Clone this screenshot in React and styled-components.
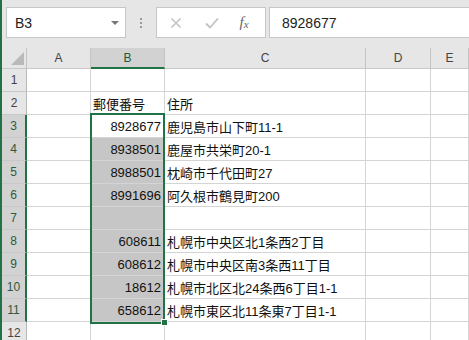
import React from 'react';
import styled, { createGlobalStyle } from 'styled-components';

const GlobalStyle = createGlobalStyle`
  html, body { margin: 0; padding: 0; background: #fff; }
  body { font-family: "Liberation Sans", "Noto Sans CJK JP", sans-serif; }
`;

const GREEN = '#217346';

const Window = styled.div`
  width: 469px;
  height: 340px;
  overflow: hidden;
  box-sizing: border-box;
  border-left: 2px solid ${GREEN};
  background: #e6e6e6;
`;

const FormulaBar = styled.div`
  height: 48px;
  box-sizing: border-box;
  padding: 7px 0 0 4px;
  display: flex;
  align-items: flex-start;
`;

const Box = styled.div`
  height: 31px;
  box-sizing: border-box;
  border: 1px solid #c6c6c6;
  background: #fff;
  display: flex;
  align-items: center;
`;

const NameBox = styled(Box)`
  width: 120px;
  padding: 0 6px 0 8px;
  justify-content: space-between;
  font-size: 14px;
  color: #222;
`;

const Arrow = styled.span`
  width: 0;
  height: 0;
  border-left: 4px solid transparent;
  border-right: 4px solid transparent;
  border-top: 4px solid #777;
`;

const Dots = styled.div`
  width: 30px;
  height: 31px;
  display: flex;
  flex-direction: column;
  align-items: center;
  justify-content: center;
  gap: 2px;
  span {
    width: 2px;
    height: 2px;
    background: #9a9a9a;
  }
`;

const ButtonBox = styled(Box)`
  width: 110px;
  padding: 0 0 0 12px;
  gap: 0;
`;

const IconSlot = styled.span`
  width: ${p => p.$w}px;
  display: flex;
  justify-content: center;
  align-items: center;
`;

const Fx = styled.span`
  font-family: "Liberation Serif", "DejaVu Serif", serif;
  font-style: italic;
  font-size: 15px;
  color: #666;
  sub {
    font-size: 11px;
    vertical-align: -1px;
  }
`;

const FormulaInput = styled(Box)`
  flex: 1;
  margin-left: 3px;
  margin-right: -2px;
  padding-left: 12px;
  font-size: 14px;
  color: #222;
`;

const Sheet = styled.div`
  position: relative;
  display: grid;
  grid-template-columns: 25px 64px 74px 201px 65px 1fr;
  grid-template-rows: 21px;
  grid-auto-rows: 23px;
  background: #fff;
`;

const ColHead = styled.div`
  box-sizing: border-box;
  background: ${p => (p.$sel ? '#d2d2d2' : '#e6e6e6')};
  border-right: 1px solid #c4c4c4;
  border-bottom: ${p => (p.$sel ? `2px solid ${GREEN}` : '1px solid #c8c8c8')};
  color: ${p => (p.$sel ? '#1f5a37' : '#444')};
  font-size: 12px;
  display: flex;
  align-items: center;
  justify-content: center;
  padding-top: ${p => (p.$sel ? '1px' : '0')};
`;

const Corner = styled(ColHead)`
  position: relative;
  &::after {
    content: '';
    position: absolute;
    right: 2px;
    bottom: 3px;
    width: 0;
    height: 0;
    border-left: 13px solid transparent;
    border-bottom: 13px solid #b9b9b9;
  }
`;

const RowHead = styled.div`
  box-sizing: border-box;
  background: ${p => (p.$sel ? '#d2d2d2' : '#e6e6e6')};
  border-right: ${p => (p.$sel ? `2px solid ${GREEN}` : '1px solid #b8b8b8')};
  border-bottom: 1px solid #c8c8c8;
  color: ${p => (p.$sel ? '#2b5a3e' : '#444')};
  font-size: 12px;
  display: flex;
  align-items: center;
  justify-content: center;
`;

const Cell = styled.div`
  box-sizing: border-box;
  background: ${p => (p.$fill ? '#c6c6c6' : '#fff')};
  border-right: 1px solid #d4d4d4;
  border-bottom: 1px solid #d4d4d4;
  font-size: 13px;
  color: #111;
  display: flex;
  align-items: center;
  justify-content: ${p => (p.$right ? 'flex-end' : 'flex-start')};
  padding: 1px 3px 0 2px;
  white-space: nowrap;
  overflow: visible;
`;

const Selection = styled.div`
  position: absolute;
  left: 88px;
  top: 65px;
  width: 75px;
  height: 211px;
  box-sizing: border-box;
  border: 2px solid ${GREEN};
  pointer-events: none;
`;

const Handle = styled.div`
  position: absolute;
  right: -4px;
  bottom: -3px;
  width: 5px;
  height: 5px;
  background: ${GREEN};
  outline: 1px solid #fff;
`;

const rows = [
  { b: '', c: '' },
  { b: '郵便番号', c: '住所', text: true },
  { b: '8928677', c: '鹿児島市山下町11-1' },
  { b: '8938501', c: '鹿屋市共栄町20-1' },
  { b: '8988501', c: '枕崎市千代田町27' },
  { b: '8991696', c: '阿久根市鶴見町200' },
  { b: '', c: '' },
  { b: '608611', c: '札幌市中央区北1条西2丁目' },
  { b: '608612', c: '札幌市中央区南3条西11丁目' },
  { b: '18612', c: '札幌市北区北24条西6丁目1-1' },
  { b: '658612', c: '札幌市東区北11条東7丁目1-1' },
  { b: '', c: '' },
];

function CrossIcon() {
  return (
    <svg width="12" height="12" viewBox="0 0 12 12">
      <path d="M1.5 1.5 L10.5 10.5 M10.5 1.5 L1.5 10.5" stroke="#c2c2c2" strokeWidth="1.6" fill="none" />
    </svg>
  );
}

function CheckIcon() {
  return (
    <svg width="14" height="12" viewBox="0 0 14 12">
      <path d="M1 6.5 L5 10.5 L13 1.5" stroke="#c2c2c2" strokeWidth="1.8" fill="none" />
    </svg>
  );
}

export default function App() {
  return (
    <>
      <GlobalStyle />
      <Window>
        <FormulaBar>
          <NameBox>
            <span>B3</span>
            <Arrow />
          </NameBox>
          <Dots>
            <span />
            <span />
            <span />
          </Dots>
          <ButtonBox>
            <IconSlot $w={14}><CrossIcon /></IconSlot>
            <IconSlot $w={22} />
            <IconSlot $w={14}><CheckIcon /></IconSlot>
            <IconSlot $w={18} />
            <IconSlot $w={14}><Fx>f<sub>x</sub></Fx></IconSlot>
          </ButtonBox>
          <FormulaInput>8928677</FormulaInput>
        </FormulaBar>

        <Sheet>
          <Corner />
          <ColHead>A</ColHead>
          <ColHead $sel>B</ColHead>
          <ColHead>C</ColHead>
          <ColHead>D</ColHead>
          <ColHead>E</ColHead>

          {rows.map((r, i) => {
            const n = i + 1;
            const sel = n >= 3 && n <= 11;
            return (
              <React.Fragment key={n}>
                <RowHead $sel={sel}>{n}</RowHead>
                <Cell />
                <Cell $right={!r.text} $fill={n >= 4 && n <= 11}>{r.b}</Cell>
                <Cell>{r.c}</Cell>
                <Cell />
                <Cell />
              </React.Fragment>
            );
          })}

          <Selection>
            <Handle />
          </Selection>
        </Sheet>
      </Window>
    </>
  );
}
